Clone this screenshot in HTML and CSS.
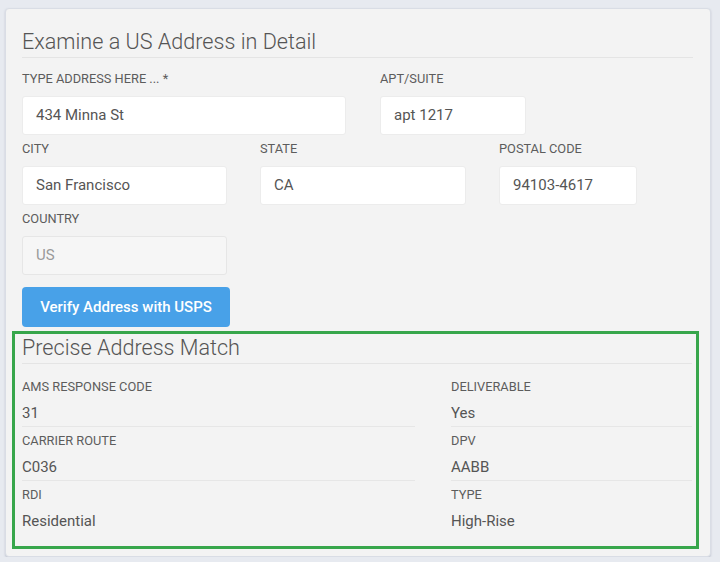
FILE: index.html
```html
<!DOCTYPE html>
<html lang="en">
<head>
<meta charset="utf-8">
<title>Examine a US Address in Detail</title>
<link rel="stylesheet" href="styles.css">
</head>
<body>
<div class="card">
  <h1 class="title">Examine a US Address in Detail</h1>
  <div class="rule"></div>

  <div class="row">
    <div class="field w-address">
      <div class="label">Type address here ... *</div>
      <div class="input">434 Minna St</div>
    </div>
    <div class="field w-apt">
      <div class="label">Apt/Suite</div>
      <div class="input">apt 1217</div>
    </div>
  </div>

  <div class="row">
    <div class="field w-city">
      <div class="label">City</div>
      <div class="input">San Francisco</div>
    </div>
    <div class="field w-state">
      <div class="label">State</div>
      <div class="input">CA</div>
    </div>
    <div class="field w-postal">
      <div class="label">Postal code</div>
      <div class="input">94103-4617</div>
    </div>
  </div>

  <div class="row">
    <div class="field w-city">
      <div class="label">Country</div>
      <div class="input disabled">US</div>
    </div>
  </div>

  <button class="btn">Verify Address with USPS</button>

  <section class="result">
    <h2 class="title sub">Precise Address Match</h2>
    <div class="rule"></div>
    <div class="grid">
      <div class="item">
        <div class="label">AMS Response Code</div>
        <div class="value">31</div>
      </div>
      <div class="item">
        <div class="label">Deliverable</div>
        <div class="value">Yes</div>
      </div>
      <div class="item">
        <div class="label">Carrier Route</div>
        <div class="value">C036</div>
      </div>
      <div class="item">
        <div class="label">DPV</div>
        <div class="value">AABB</div>
      </div>
      <div class="item last">
        <div class="label">RDI</div>
        <div class="value">Residential</div>
      </div>
      <div class="item last">
        <div class="label">Type</div>
        <div class="value">High-Rise</div>
      </div>
    </div>
  </section>
</div>
</body>
</html>
```

FILE: styles.css
```css
* { box-sizing: border-box; }

html, body {
  margin: 0;
  padding: 0;
  background: #e7eaf0;
  font-family: Roboto, "Liberation Sans", Arial, sans-serif;
  color: #444;
}

body {
  padding: 8px 0 0 5px;
}

.card {
  width: 706px;
  background: #f3f3f3;
  border: 1px solid #d9dde5;
  border-radius: 4px;
  box-shadow: 0 1px 2px rgba(120, 130, 150, 0.35);
  padding: 21px 17px 7px 16px;
}

.title {
  margin: 0;
  font-size: 21.6px;
  line-height: 24px;
  font-weight: 300;
  color: #555;
}

.rule {
  height: 1px;
  background: #e4e4e4;
  margin-top: 3px;
  margin-bottom: 14px;
}

.row {
  display: flex;
  gap: 33px;
  margin-bottom: 7px;
}

.field { display: flex; flex-direction: column; }

.w-address { width: 324px; margin-right: 1px; }
.w-apt { width: 146px; }
.w-city { width: 205px; }
.w-state { width: 206px; }
.w-postal { width: 138px; }

.label {
  font-size: 12.8px;
  line-height: 14px;
  text-transform: uppercase;
  color: #5c5c5c;
}

.field .label { margin-bottom: 10px; }

.input {
  height: 39px;
  background: #fff;
  border: 1px solid #ececec;
  border-radius: 3px;
  padding-left: 13px;
  font-size: 15px;
  line-height: 37px;
  color: #555;
}

.input.disabled {
  background: #f6f6f6;
  border-color: #e6e6e6;
  color: #9a9a9a;
}

.btn {
  display: block;
  margin-top: 12px;
  width: 208px;
  height: 40px;
  border: 0;
  border-radius: 4px;
  background: #48a1e8;
  color: #fff;
  font-family: Roboto, "Liberation Sans", Arial, sans-serif;
  font-size: 15px;
  font-weight: 500;
  padding: 0;
}

.result {
  margin: 4px -6px 0 -10px;
  border: 3px solid #37a64b;
  padding: 2px 4px 12px 7px;
}

.result .rule { margin-bottom: 16px; }

.grid {
  display: grid;
  grid-template-columns: 393px 241px;
  column-gap: 36px;
}

.item {
  border-bottom: 1px solid #e6e6e6;
  padding-bottom: 3px;
  margin-bottom: 7px;
}

.item.last {
  border-bottom: 0;
  margin-bottom: 0;
}

.item .label { margin-bottom: 9px; }

.value {
  font-size: 15px;
  line-height: 20px;
  color: #555;
}
```
